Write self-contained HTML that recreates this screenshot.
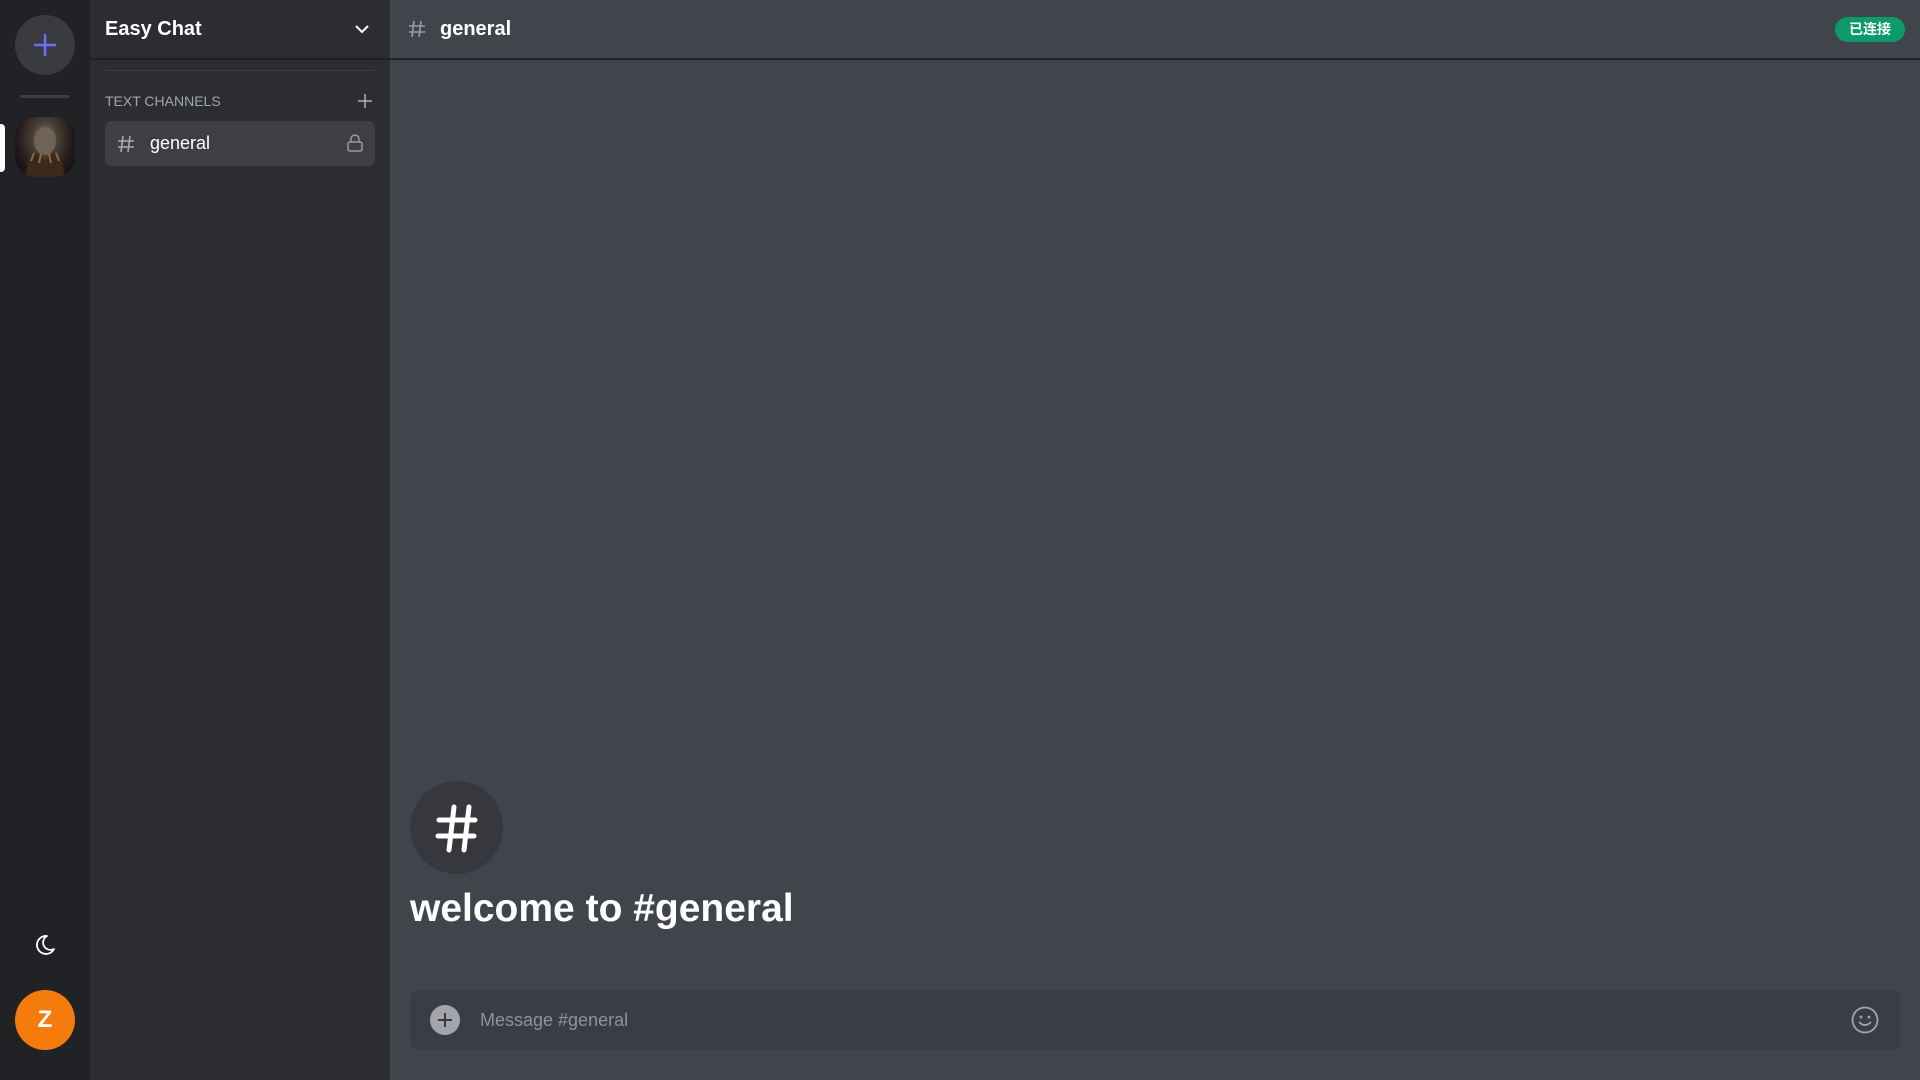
<!DOCTYPE html>
<html><head><meta charset="utf-8"><style>
*{margin:0;padding:0;box-sizing:border-box}
body{width:1920px;height:1080px;overflow:hidden;background:#40444b;font-family:"Liberation Sans","Noto Sans CJK SC",sans-serif;position:relative}
.rail{position:absolute;left:0;top:0;width:90px;height:1080px;background:#202225}
.side{position:absolute;left:90px;top:0;width:300px;height:1080px;background:#2b2d31}
.abs{position:absolute}
</style></head><body>
<div class="rail">
  <div class="abs" style="left:15px;top:15px;width:60px;height:60px;border-radius:50%;background:#3a3b3e"></div>
  <svg class="abs" style="left:15px;top:15px" width="60" height="60"><path d="M30 19v22M19 30h22" stroke="#6b6ff0" stroke-width="2.5"/></svg>
  <div class="abs" style="left:20px;top:95px;width:50px;height:3px;background:#3c3e43;border-radius:2px"></div>
  <div class="abs" style="left:0;top:124px;width:5px;height:48px;background:#fff;border-radius:0 4px 4px 0"></div>
  <div class="abs" style="left:15px;top:117px;width:60px;height:60px;border-radius:20px;background:radial-gradient(ellipse at 50% 35%,#8a7d6d 0%,#4a3f35 30%,#22191a 65%,#120d0d 100%);overflow:hidden">
    <svg width="60" height="60"><ellipse cx="30" cy="24" rx="11" ry="14" fill="#6e6356"/><path d="M10 60 L14 40 L22 36 L30 44 L38 36 L46 40 L50 60Z" fill="#3a2a1c"/><path d="M16 44l3-8M24 46l2-9M36 46l-2-9M44 44l-3-8" stroke="#8a6a40" stroke-width="2"/></svg>
  </div>
  <svg class="abs" style="left:33px;top:933px" width="24" height="24" viewBox="0 0 24 24"><path d="M14 3a9 9 0 1 0 7 13A7 7 0 0 1 14 3z" fill="none" stroke="#fff" stroke-width="1.8" stroke-linejoin="round"/></svg>
  <div class="abs" style="left:15px;top:990px;width:60px;height:60px;border-radius:50%;background:#f47b0c;color:#fff;font-size:24px;font-weight:bold;text-align:center;line-height:60px">Z</div>
</div>
<div class="side">
  <div class="abs" style="left:0;top:0;width:300px;height:60px;border-bottom:2px solid #1f2023"></div>
  <div class="abs" style="left:15px;top:18px;color:#fff;font-size:20px;font-weight:bold">Easy Chat</div>
  <svg class="abs" style="left:263px;top:20px" width="18" height="18"><path d="M3 6l6 6 6-6" stroke="#fff" stroke-width="2" fill="none"/></svg>
  <div class="abs" style="left:15px;top:70px;width:270px;height:1px;background:#3d3f44"></div>
  <div class="abs" style="left:15px;top:93px;color:#a3a6aa;font-size:14px">TEXT CHANNELS</div>
  <svg class="abs" style="left:267px;top:93px" width="16" height="16"><path d="M8 1v14M1 8h14" stroke="#b0b2b6" stroke-width="1.5"/></svg>
  <div class="abs" style="left:15px;top:121px;width:270px;height:45px;border-radius:6px;background:#3d3f45"></div>
  <svg class="abs" style="left:26px;top:134px" width="20" height="20"><path d="M7 2L5 18M14 2l-2 16M2 7h16M2 13h16" stroke="#a8aaae" stroke-width="1.6"/></svg>
  <div class="abs" style="left:60px;top:133px;color:#fff;font-size:18px">general</div>
  <svg class="abs" style="left:256px;top:133px" width="18" height="20"><rect x="2" y="9" width="14" height="9" rx="2" fill="none" stroke="#9a9ca0" stroke-width="1.5"/><path d="M5 9V6a4 4 0 0 1 8 0v3" fill="none" stroke="#9a9ca0" stroke-width="1.5"/></svg>
</div>
<div class="abs" style="left:390px;top:0;width:1530px;height:60px;border-bottom:2px solid #202225"></div>
<svg class="abs" style="left:407px;top:19px" width="20" height="20"><path d="M7 2L5 18M14 2l-2 16M2 7h16M2 13h16" stroke="#9a9ca0" stroke-width="1.6"/></svg>
<div class="abs" style="left:440px;top:18px;color:#fff;font-size:20px;font-weight:bold">general</div>
<div class="abs" style="left:1835px;top:17px;width:70px;height:25px;border-radius:13px;background:#0d9a6a;color:#fff;font-size:14px;font-weight:bold;text-align:center;line-height:25px">已连接</div>
<div class="abs" style="left:410px;top:781px;width:93px;height:93px;border-radius:50%;background:#36383e"></div>
<svg class="abs" style="left:432px;top:803px" width="50" height="50"><path d="M22 4L17 47M37 4l-5 43M7 17h36M6 33h36" stroke="#fff" stroke-width="5" stroke-linecap="round"/></svg>
<div class="abs" style="left:410px;top:887px;color:#fff;font-size:39px;font-weight:bold">welcome to #general</div>
<div class="abs" style="left:410px;top:990px;width:1490px;height:60px;border-radius:8px;background:#3b3d45"></div>
<div class="abs" style="left:430px;top:1005px;width:30px;height:30px;border-radius:50%;background:#a3a5ab"></div>
<svg class="abs" style="left:430px;top:1005px" width="30" height="30"><path d="M15 8v14M8 15h14" stroke="#36383e" stroke-width="2"/></svg>
<div class="abs" style="left:480px;top:1010px;color:#8f9298;font-size:18px">Message #general</div>
<svg class="abs" style="left:1851px;top:1006px" width="28" height="28"><circle cx="14" cy="14" r="12.5" fill="none" stroke="#a3a5ab" stroke-width="1.8"/><circle cx="10" cy="11" r="1.4" fill="#a3a5ab"/><circle cx="18" cy="11" r="1.4" fill="#a3a5ab"/><path d="M8.5 16.5q5.5 5 11 0" fill="none" stroke="#a3a5ab" stroke-width="1.8" stroke-linecap="round"/></svg>
</body></html>
